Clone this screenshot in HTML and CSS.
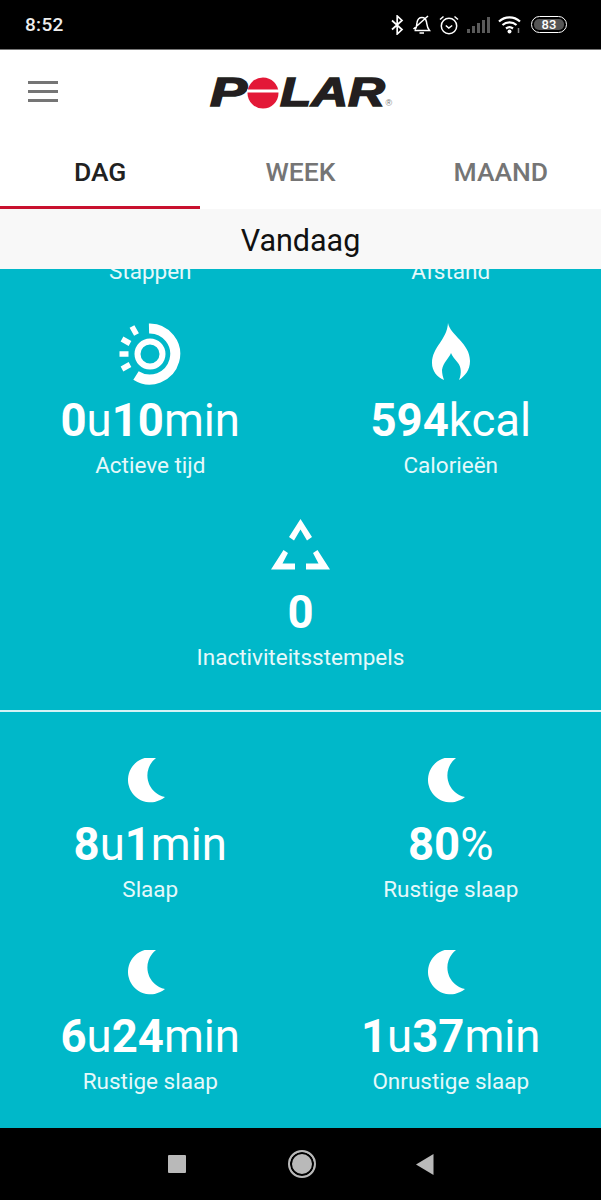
FILE: index.html
```html
<!DOCTYPE html>
<html lang="nl">
<head>
    <meta charset="UTF-8">
    <title>Polar Flow</title>
    <link rel="stylesheet" href="styles.css">
</head>
<body>
    <div class="phone">
        <div class="status-bar">
            <span class="clock">8:52</span>
            <div class="status-icons">
                <svg class="st-bt" width="13" height="20" viewBox="0 0 13 20"><path d="M1 5.500 11 14.500 6.200 19V1L11 5.500 1 14.500" fill="none" stroke="#fff" stroke-width="1.700"/></svg>
                <svg class="st-bell" width="19" height="20" viewBox="0 0 19 20"><path d="M3 14.500C5 12.500 4.500 10 5 7.500 5.600 4 8 2.500 10 2.500 12.500 2.500 14 4.500 14.500 7 15 10 15 12.500 17.500 15.500H2.500M7.500 18H12M1.500 14 16 1" fill="none" stroke="#fff" stroke-width="1.500"/></svg>
                <svg class="st-alarm" width="20" height="20" viewBox="0 0 20 20"><circle cx="10" cy="11" r="7.700" fill="none" stroke="#fff" stroke-width="1.500"/><path d="M6.800 10.500 9.800 13 13.200 10.500M1 4.500 4.500 1.500M19 4.500 15.500 1.500" fill="none" stroke="#fff" stroke-width="1.500"/></svg>
                <svg class="st-signal" width="23" height="18" viewBox="0 0 23 18"><path d="M0 13h3v4H0zM5 10h3v7H5zM10 7h3v10h-3zM15 4h3v13h-3zM20 1h3v16h-3z" fill="#5a5a5a"/></svg>
                <svg class="st-wifi" width="24" height="19" viewBox="0 0 24 19"><path d="M1 6.500C7 1 16 1 22 6.500M4.500 10C8.500 6.500 14.500 6.500 18.500 10M8 13.500C10 12 13 12 15 13.500" fill="none" stroke="#fff" stroke-width="2.200"/><circle cx="11.500" cy="16.500" r="2" fill="#fff"/><path d="M20.500 13v5" stroke="#888" stroke-width="1.500"/></svg>
                <div class="battery"><span class="battery-level">83</span></div>
            </div>
        </div>

        <header class="app-header">
            <div class="hamburger"><span></span><span></span><span></span></div>
            <svg class="logo" width="186" height="46" viewBox="0 -7 186 46" role="img" aria-label="Polar">
                <text class="logo-text" x="1" y="29" textLength="37" lengthAdjust="spacingAndGlyphs">P</text>
                <circle cx="54" cy="16" r="15.500" fill="#e31837"/>
                <rect x="38" y="12.500" width="32" height="3" fill="#fff"/>
                <text class="logo-text" x="71" y="29" textLength="105" lengthAdjust="spacingAndGlyphs">LAR</text>
                <text class="logo-reg" x="176.500" y="29">®</text>
            </svg>
        </header>

        <nav class="tabs">
            <div class="tab active">DAG</div>
            <div class="tab">WEEK</div>
            <div class="tab">MAAND</div>
        </nav>

        <div class="date-bar">Vandaag</div>

        <main class="content">
            <section class="stats first">
                <div class="stat label-only"><div class="stat-label">Stappen</div></div>
                <div class="stat label-only"><div class="stat-label">Afstand</div></div>

                <div class="stat">
                    <div class="stat-icon">
                        <svg width="64" height="64" viewBox="0 0 64 64">
                            <path d="M31 6.500A25.500 25.500 0 1 1 18 53.500" fill="none" stroke="#fff" stroke-width="10"/>
                            <circle cx="32" cy="32" r="12.500" fill="none" stroke="#fff" stroke-width="6"/>
                            <path d="M1.500 32h9M4 17l8 4.500M14 4.500l4.500 8M4 47l8-4.500" stroke="#fff" stroke-width="5.500" fill="none"/>
                        </svg>
                    </div>
                    <div class="stat-value"><b>0</b>u<b>10</b>min</div>
                    <div class="stat-label">Actieve tijd</div>
                </div>
                <div class="stat">
                    <div class="stat-icon">
                        <svg class="flame" width="38" height="57" viewBox="0 0 38 57"><path d="M16 0C18 12 38 20 38 38 38 47 33 53 27 57 30 50 29 44 26 40 23 36 20 33 19 30 17 35 11 40 10 47 10 51 11 54 12 57 5 54 0 48 0 40 0 24 15 17 16 0Z" fill="#fff"/></svg>
                    </div>
                    <div class="stat-value"><b>594</b>kcal</div>
                    <div class="stat-label">Calorieën</div>
                </div>
                <div class="stat wide">
                    <div class="stat-icon">
                        <svg width="59" height="51" viewBox="0 0 59 51"><path d="M29.500 0 41 18 36 21.500 29.500 10.500 23 21.500 18 18ZM12.500 31 17 34 11.500 44.500H24V50.500H0ZM46.500 31 42 34 47.500 44.500H35V50.500H59Z" fill="#fff"/></svg>
                    </div>
                    <div class="stat-value"><b>0</b></div>
                    <div class="stat-label">Inactiviteitsstempels</div>
                </div>
            </section>

            <hr class="divider">

            <section class="stats sleep">
                <div class="stat">
                    <div class="stat-icon"><svg class="moon" width="37" height="45" viewBox="0 0 37 45"><path d="M28 0A22.500 22.500 0 1 0 37 39 22 22 0 0 1 28 0Z" fill="#fff"/></svg></div>
                    <div class="stat-value"><b>8</b>u<b>1</b>min</div>
                    <div class="stat-label">Slaap</div>
                </div>
                <div class="stat">
                    <div class="stat-icon"><svg class="moon" width="37" height="45" viewBox="0 0 37 45"><path d="M28 0A22.500 22.500 0 1 0 37 39 22 22 0 0 1 28 0Z" fill="#fff"/></svg></div>
                    <div class="stat-value"><b>80</b>%</div>
                    <div class="stat-label">Rustige slaap</div>
                </div>
                <div class="stat">
                    <div class="stat-icon"><svg class="moon" width="37" height="45" viewBox="0 0 37 45"><path d="M28 0A22.500 22.500 0 1 0 37 39 22 22 0 0 1 28 0Z" fill="#fff"/></svg></div>
                    <div class="stat-value"><b>6</b>u<b>24</b>min</div>
                    <div class="stat-label">Rustige slaap</div>
                </div>
                <div class="stat">
                    <div class="stat-icon"><svg class="moon" width="37" height="45" viewBox="0 0 37 45"><path d="M28 0A22.500 22.500 0 1 0 37 39 22 22 0 0 1 28 0Z" fill="#fff"/></svg></div>
                    <div class="stat-value"><b>1</b>u<b>37</b>min</div>
                    <div class="stat-label">Onrustige slaap</div>
                </div>
            </section>
        </main>

        <div class="nav-bar">
            <span class="nav-square"></span>
            <span class="nav-home"></span>
            <svg width="18" height="21" viewBox="0 0 18 21"><path d="M0 10.500 17.500 0V21Z" fill="#b9b9b9"/></svg>
        </div>
    </div>
</body>
</html>
```

FILE: styles.css
```css
* {
    box-sizing: border-box;
}
body {
    margin: 0;
    font-family: Roboto, "Liberation Sans", sans-serif;
    background-color: #000;
}
.phone {
    width: 601px;
    height: 1200px;
    display: flex;
    flex-direction: column;
    overflow: hidden;
}
.status-bar {
    height: 50px;
    flex-shrink: 0;
    display: flex;
    align-items: center;
    justify-content: space-between;
    padding: 4px 34px 4px 25px;
    background-color: #000;
    border-bottom: 1px solid #777;
    color: #eee;
}
.clock {
    font-size: 19px;
    font-weight: 500;
    letter-spacing: 0.3px;
}
.status-icons {
    display: flex;
    align-items: center;
    gap: 8px;
}
.battery {
    width: 36px;
    height: 17px;
    margin-left: 1px;
    padding: 2px;
    border: 1.500px solid #fff;
    border-radius: 9px;
    display: flex;
}
.battery-level {
    flex: 1;
    background-color: #555;
    border-radius: 5px;
    font-size: 13px;
    line-height: 11px;
    font-weight: 500;
    text-align: center;
    color: #fff;
}
.app-header {
    height: 84px;
    flex-shrink: 0;
    background-color: #fff;
    display: flex;
    align-items: center;
    justify-content: center;
    position: relative;
}
.hamburger {
    position: absolute;
    left: 28px;
    top: 31px;
    width: 30px;
    display: flex;
    flex-direction: column;
    gap: 6px;
}
.hamburger span {
    height: 3px;
    background-color: #757575;
}
.logo {
    margin-left: 2px;
    margin-top: 2px;
}
.logo-text {
    font-family: "Liberation Sans", sans-serif;
    font-size: 40px;
    font-weight: bold;
    font-style: italic;
    fill: #231f20;
    stroke: #231f20;
    stroke-width: 1.500px;
}
.logo-reg {
    font-family: "Liberation Sans", sans-serif;
    font-size: 9px;
    fill: #777;
}
.tabs {
    height: 75px;
    flex-shrink: 0;
    display: flex;
    background-color: #fff;
}
.tab {
    flex: 1;
    display: flex;
    align-items: center;
    justify-content: center;
    padding-top: 2px;
    font-size: 26.500px;
    font-weight: 500;
    color: #757575;
    border-bottom: 3px solid transparent;
}
.tab.active {
    color: #212121;
    border-bottom-color: #c8102e;
}
.date-bar {
    height: 60px;
    flex-shrink: 0;
    display: flex;
    align-items: center;
    justify-content: center;
    padding-top: 3px;
    background-color: #f8f8f8;
    font-size: 30.500px;
    color: #111;
}
.content {
    height: 859px;
    flex-shrink: 0;
    overflow: hidden;
    background-color: #00b8c9;
    color: #fff;
}
.stats {
    display: grid;
    grid-template-columns: 1fr 1fr;
    row-gap: 34px;
    padding-top: 36px;
}
.stats.first {
    margin-top: -14px;
    padding-top: 0;
}
.stat {
    display: flex;
    flex-direction: column;
    align-items: center;
}
.stat.label-only {
    margin-bottom: 2px;
}
.stat.wide {
    grid-column: 1 / 3;
    margin-top: -2px;
}
.stat-icon {
    height: 64px;
    margin-bottom: 7px;
    display: flex;
    align-items: center;
    justify-content: center;
}
.stat.wide .stat-icon {
    margin-bottom: 9px;
}
.flame {
    margin-top: -6px;
}
.moon {
    margin-right: 8px;
}
.stats.sleep {
    row-gap: 36px;
}
.sleep .stat-icon {
    margin-bottom: 5px;
}
.stat-value {
    height: 56px;
    font-size: 45.500px;
    line-height: 56px;
    font-weight: 400;
}
.stat-value b {
    font-weight: 700;
}
.stat-label {
    height: 30px;
    margin-top: 1px;
    font-size: 22.500px;
    line-height: 30px;
    color: #e6f8fa;
}
.stat.wide .stat-label {
    margin-top: 1px;
}
.divider {
    height: 2px;
    margin: 38px 0 0;
    border: none;
    background-color: #d4f2f5;
}
.nav-bar {
    flex: 1;
    background-color: #000;
    display: flex;
    align-items: center;
    justify-content: center;
    gap: 100px;
}
.nav-square {
    width: 18px;
    height: 18px;
    margin-right: 2px;
    background-color: #b9b9b9;
    border-radius: 1px;
}
.nav-home {
    width: 28px;
    height: 28px;
    border-radius: 50%;
    background-color: #b9b9b9;
    border: 2px solid #b9b9b9;
    box-shadow: inset 0 0 0 2px #000;
}
```
